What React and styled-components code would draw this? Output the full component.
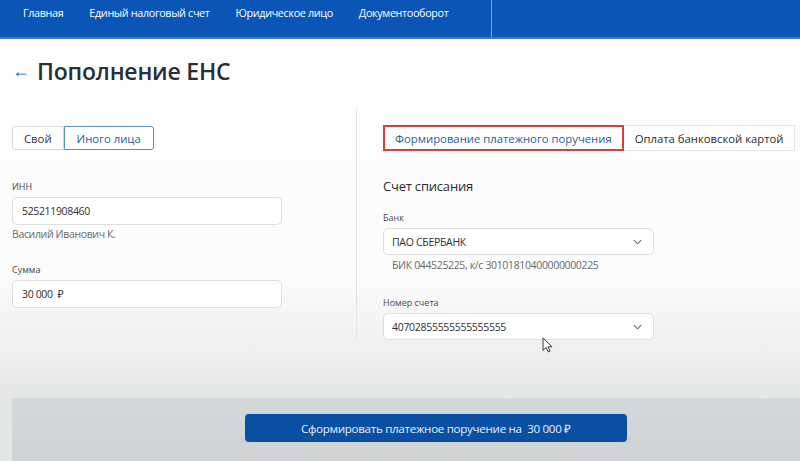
import React, { useState } from "react";
import styled, { createGlobalStyle } from "styled-components";

const GlobalStyle = createGlobalStyle`
  html, body {
    margin: 0;
    padding: 0;
    width: 800px;
    height: 461px;
    overflow: hidden;
  }
  body {
    font-family: "Open Sans", "Noto Sans", sans-serif;
    color: #2b2f35;
  }
`;

const navItems = [
  "Главная",
  "Единый налоговый счет",
  "Юридическое лицо",
  "Документооборот",
];

const App = () => {
  const [payer, setPayer] = useState("other");
  const [tab, setTab] = useState("order");

  return (
    <Page>
      <GlobalStyle />
      <TopBar>
        <NavList>
          {navItems.map((item) => (
            <NavItem key={item}>{item}</NavItem>
          ))}
        </NavList>
        <NavSide />
      </TopBar>

      <TitleRow>
        <BackArrow>←</BackArrow>
        <Title>Пополнение ЕНС</Title>
      </TitleRow>

      <Columns>
        <LeftCol>
          <Segmented>
            <SegButton active={payer === "own"} onClick={() => setPayer("own")}>
              Свой
            </SegButton>
            <SegButton
              active={payer === "other"}
              onClick={() => setPayer("other")}
            >
              Иного лица
            </SegButton>
          </Segmented>

          <FieldLabel top={31}>ИНН</FieldLabel>
          <Input>525211908460</Input>
          <Hint>Василий Иванович К.</Hint>

          <FieldLabel top={22}>Сумма</FieldLabel>
          <Input>30 000&nbsp; ₽</Input>
        </LeftCol>

        <Divider />

        <RightCol>
          <Tabs>
            <Tab active={tab === "order"} onClick={() => setTab("order")}>
              Формирование платежного поручения
            </Tab>
            <Tab active={tab === "card"} onClick={() => setTab("card")}>
              Оплата банковской картой
            </Tab>
          </Tabs>

          <SectionTitle>Счет списания</SectionTitle>

          <FieldLabel top={16}>Банк</FieldLabel>
          <Select>
            ПАО СБЕРБАНК
            <Chevron />
          </Select>
          <Hint indent>БИК 044525225, к/с 30101810400000000225</Hint>

          <FieldLabel top={24}>Номер счета</FieldLabel>
          <Select>
            40702855555555555555
            <Chevron />
          </Select>
          <Cursor />
        </RightCol>
      </Columns>

      <Footer>
        <SubmitButton>Сформировать платежное поручение на&nbsp; 30 000 ₽</SubmitButton>
      </Footer>
    </Page>
  );
};

const Chevron = () => (
  <ChevronIcon viewBox="0 0 10 6" width="9" height="6">
    <path d="M1 1l4 4 4-4" fill="none" stroke="#666" strokeWidth="1.2" />
  </ChevronIcon>
);

const Cursor = () => (
  <CursorIcon viewBox="0 0 12 18" width="11" height="16">
    <path
      d="M1 1v14l3.5-3.2 2.4 5 2-0.9-2.3-4.9H11z"
      fill="#fff"
      stroke="#222"
      strokeWidth="1"
      strokeLinejoin="round"
    />
  </CursorIcon>
);

const Page = styled.div`
  width: 800px;
  height: 461px;
  display: flex;
  flex-direction: column;
  background: linear-gradient(
    180deg,
    #ffffff 0%,
    #fbfbfb 60%,
    #f0f0f0 75%,
    #e5e6e6 86%
  );
`;

const TopBar = styled.header`
  height: 37px;
  display: flex;
  background: #0a55b6;
  border-bottom: 2px solid #2f7fe0;
  flex-shrink: 0;
`;

const NavList = styled.nav`
  width: 492px;
  display: flex;
  gap: 26px;
  padding: 5px 0 0 23px;
  box-sizing: border-box;
  border-right: 1px solid #7aa6e0;
`;

const NavItem = styled.span`
  color: #fff;
  font-size: 10.8px;
  letter-spacing: -0.35px;
  line-height: 16px;
`;

const NavSide = styled.div`
  flex: 1;
`;

const TitleRow = styled.div`
  display: flex;
  align-items: center;
  gap: 7px;
  padding: 14px 0 0 12px;
  height: 36px;
`;

const BackArrow = styled.span`
  color: #1e63b8;
  font-size: 18px;
  line-height: 1;
  margin-top: -3px;
`;

const Title = styled.h1`
  margin: 0;
  font-size: 23px;
  font-weight: 600;
  color: #2a2e35;
  letter-spacing: -0.2px;
`;

const Columns = styled.div`
  display: flex;
  margin-top: 20px;
`;

const LeftCol = styled.div`
  width: 356px;
  flex-shrink: 0;
  box-sizing: border-box;
  padding: 17px 0 0 12px;
  display: flex;
  flex-direction: column;
`;

const Divider = styled.div`
  width: 1px;
  flex-shrink: 0;
  height: 231px;
  background: #e3e3e3;
`;

const RightCol = styled.div`
  position: relative;
  flex: 1;
  min-width: 0;
  padding: 16px 0 0 26px;
  display: flex;
  flex-direction: column;
`;

const Segmented = styled.div`
  display: flex;
`;

const SegButton = styled.button`
  font-family: "Open Sans", sans-serif;
  font-size: 11.3px;
  height: 24px;
  padding: 0 ${(p) => (p.active ? "12px" : "11px")};
  background: #fff;
  cursor: pointer;
  color: ${(p) => (p.active ? "#1f5c9e" : "#333")};
  border: 1px solid ${(p) => (p.active ? "#5b8fc0" : "#dadada")};
  border-radius: ${(p) => (p.active ? "0 3px 3px 0" : "3px 0 0 3px")};
`;

const FieldLabel = styled.div`
  font-size: 9px;
  color: #4a4a4a;
  margin-top: ${(p) => p.top}px;
  margin-bottom: 4px;
  line-height: 12px;
`;

const Input = styled.div`
  width: 270px;
  height: 28px;
  box-sizing: border-box;
  border: 1px solid #dedede;
  border-radius: 5px;
  background: #fff;
  display: flex;
  align-items: center;
  padding-left: 9px;
  font-size: 10.5px;
  letter-spacing: -0.35px;
  color: #2f2f2f;
`;

const Hint = styled.div`
  font-size: 10.5px;
  letter-spacing: -0.35px;
  color: #6b6b6b;
  margin-top: ${(p) => (p.indent ? "2px" : "1px")};
  padding-left: ${(p) => (p.indent ? "9px" : "0")};
  line-height: 16px;
`;

const Tabs = styled.div`
  display: flex;
`;

const Tab = styled.button`
  font-family: "Open Sans", sans-serif;
  font-size: 11.3px;
  white-space: nowrap;
  flex-shrink: 0;
  height: 26px;
  padding: 0 ${(p) => (p.active ? "10px" : "11px")};
  background: #fff;
  cursor: pointer;
  color: ${(p) => (p.active ? "#1d5ea7" : "#2d2d2d")};
  border: ${(p) => (p.active ? "2px solid #e23a3a" : "1px solid #e5e5e5")};
  border-left: ${(p) => (p.active ? "2px solid #e23a3a" : "none")};
`;

const SectionTitle = styled.h2`
  margin: 25px 0 0;
  font-size: 13px;
  font-weight: 500;
  letter-spacing: -0.2px;
  color: #2b2b2b;
  line-height: 20px;
`;

const Select = styled.div`
  width: 271px;
  height: 27px;
  box-sizing: border-box;
  border: 1px solid #dedede;
  border-radius: 5px;
  background: #fff;
  display: flex;
  align-items: center;
  justify-content: space-between;
  padding: 0 11px 0 8px;
  font-size: 10.5px;
  letter-spacing: -0.3px;
  color: #2f2f2f;
`;

const ChevronIcon = styled.svg`
  flex-shrink: 0;
`;

const CursorIcon = styled.svg`
  position: absolute;
  left: 185px;
  top: 228px;
`;

const Footer = styled.footer`
  margin: auto 0 0 12px;
  height: 63px;
  background: linear-gradient(180deg, #d4d8d8 0%, #cfd3d3 100%);
  display: flex;
  padding: 16px 0 0 233px;
  box-sizing: border-box;
`;

const SubmitButton = styled.button`
  width: 382px;
  height: 28px;
  border: none;
  border-radius: 4px;
  background: #0a50a2;
  color: #e8eef7;
  font-family: "Open Sans", sans-serif;
  font-size: 11.6px;
  letter-spacing: -0.3px;
  cursor: pointer;
`;

export default App;
